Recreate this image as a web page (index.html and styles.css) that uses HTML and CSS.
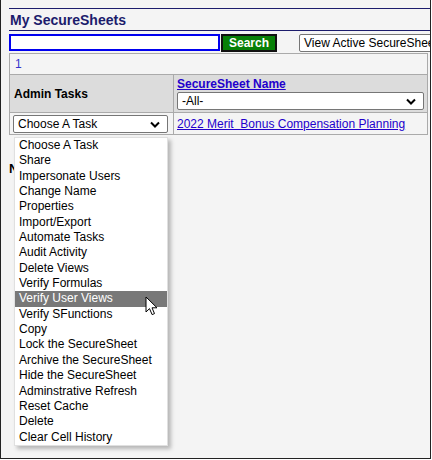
FILE: index.html
```html
<!DOCTYPE html>
<html lang="en">
<head>
    <meta charset="UTF-8">
    <title>My SecureSheets</title>
    <link rel="stylesheet" href="styles.css">
</head>
<body>
    <div class="frame">
        <div class="page">
            <header class="titlebar"><h1>My SecureSheets</h1></header>
            <form class="searchrow">
                <input type="text" class="search-input">
                <button type="button" class="search-btn">Search</button>
                <div class="select view-select">View Active SecureShee</div>
            </form>
            <table class="sheets" cellspacing="0">
                <colgroup>
                    <col class="col-tasks">
                    <col>
                </colgroup>
                <tr class="pager">
                    <td colspan="2"><a href="#">1</a></td>
                </tr>
                <tr class="head">
                    <th class="tasks-head">Admin Tasks</th>
                    <th>
                        <a href="#" class="head-link">SecureSheet Name</a>
                        <div class="select wide">-All-<svg class="chev" width="10" height="7" viewBox="0 0 10 7"><path d="M1 1.5l4 4 4-4" fill="none" stroke="#000" stroke-width="2"/></svg></div>
                    </th>
                </tr>
                <tr class="row">
                    <td>
                        <div class="select task">Choose A Task<svg class="chev" width="10" height="7" viewBox="0 0 10 7"><path d="M1 1.5l4 4 4-4" fill="none" stroke="#000" stroke-width="2"/></svg></div>
                    </td>
                    <td><a href="#">2022 Merit&nbsp; Bonus Compensation Planning</a></td>
                </tr>
            </table>
            <div class="notes">
                <b>N</b>
            </div>
        </div>

        <ul class="task-menu">
            <li>Choose A Task</li>
            <li>Share</li>
            <li>Impersonate Users</li>
            <li>Change Name</li>
            <li>Properties</li>
            <li>Import/Export</li>
            <li>Automate Tasks</li>
            <li>Audit Activity</li>
            <li>Delete Views</li>
            <li>Verify Formulas</li>
            <li class="active">Verify User Views</li>
            <li>Verify SFunctions</li>
            <li>Copy</li>
            <li>Lock the SecureSheet</li>
            <li>Archive the SecureSheet</li>
            <li>Hide the SecureSheet</li>
            <li>Adminstrative Refresh</li>
            <li>Reset Cache</li>
            <li>Delete</li>
            <li>Clear Cell History</li>
        </ul>

        <svg class="cursor" width="14" height="21" viewBox="0 0 14 21">
            <path d="M1 1v15l3.5-3.4 2.6 6 2.4-1-2.5-5.8H12z" fill="#fff" stroke="#000" stroke-width="1" stroke-linejoin="round"/>
        </svg>
    </div>
</body>
</html>
```

FILE: styles.css
```css
* {
    margin: 0;
    padding: 0;
    box-sizing: border-box;
}

body {
    background-color: #fff;
    font-family: "Liberation Sans", Arial, sans-serif;
    font-size: 12px;
    color: #000;
}

.frame {
    position: relative;
    width: 431px;
    height: 459px;
    background-color: #f4f4f4;
    border-left: 1px solid #222;
    border-right: 1px solid #222;
    border-bottom: 1px solid #222;
    overflow: hidden;
}

.page {
    padding: 8px 0 0 8px;
}

.titlebar {
    border-top: 1px solid #1c1c6c;
    border-bottom: 1px solid #1c1c6c;
    height: 23px;
    padding: 2px 0 0 1px;
}

.titlebar h1 {
    font-size: 14px;
    font-weight: bold;
    color: #1c1c6c;
    line-height: 18px;
}

.searchrow {
    display: flex;
    align-items: flex-start;
    margin-top: 3px;
    white-space: nowrap;
    overflow: hidden;
}

.search-input {
    flex-shrink: 0;
    width: 211px;
    height: 17px;
    border: 2px solid #0000f0;
    background-color: #fff;
    outline: none;
}

.search-btn {
    flex-shrink: 0;
    width: 56px;
    height: 18px;
    margin-left: 1px;
    background-color: #078007;
    border: 2px solid #111;
    color: #fff;
    font-family: "Liberation Sans", Arial, sans-serif;
    font-size: 12px;
    font-weight: bold;
    line-height: 13px;
}

.select {
    position: relative;
    height: 18px;
    background-color: #fff;
    border: 1px solid #767676;
    border-radius: 2px;
    font-size: 12px;
    font-weight: normal;
    line-height: 16px;
    padding-left: 4px;
    white-space: nowrap;
    color: #000;
}

.view-select {
    flex-shrink: 0;
    margin-left: 22px;
    width: 170px;
    overflow: hidden;
}

.chev {
    position: absolute;
    right: 7px;
    top: 5px;
}

.sheets {
    margin-top: 1px;
    width: 419px;
    border-collapse: collapse;
    table-layout: fixed;
}

.col-tasks {
    width: 164px;
}

.sheets td,
.sheets th {
    border: 1px solid #aaa;
    text-align: left;
    vertical-align: middle;
}

.sheets a {
    color: #2200cc;
}

.pager td {
    height: 21px;
    padding: 0 5px;
}

.pager a {
    text-decoration: none;
    color: #3333cc;
}

.head th {
    height: 38px;
    background-color: #dcdcdc;
    font-weight: bold;
    padding: 2px 3px;
}

.tasks-head {
    padding-left: 4px !important;
}

.head-link {
    display: block;
    font-weight: bold;
    line-height: 14px;
    margin-bottom: 1px;
}

.row td {
    height: 22px;
    padding: 0 3px;
}

.select.task {
    width: 155px;
}

.notes {
    padding-top: 26px;
}

.notes b {
    font-size: 13px;
    display: block;
}

.task-menu {
    position: absolute;
    left: 13px;
    top: 137px;
    width: 154px;
    list-style: none;
    background-color: #fff;
    border: 1px solid #e0e0e0;
    box-shadow: 3px 3px 4px rgba(0, 0, 0, 0.25);
}

.task-menu li {
    height: 15.35px;
    line-height: 15px;
    padding-left: 4px;
    font-size: 12px;
    white-space: nowrap;
}

.task-menu li.active {
    background-color: #787878;
    color: #fff;
}

.cursor {
    position: absolute;
    left: 144px;
    top: 296px;
}
```
